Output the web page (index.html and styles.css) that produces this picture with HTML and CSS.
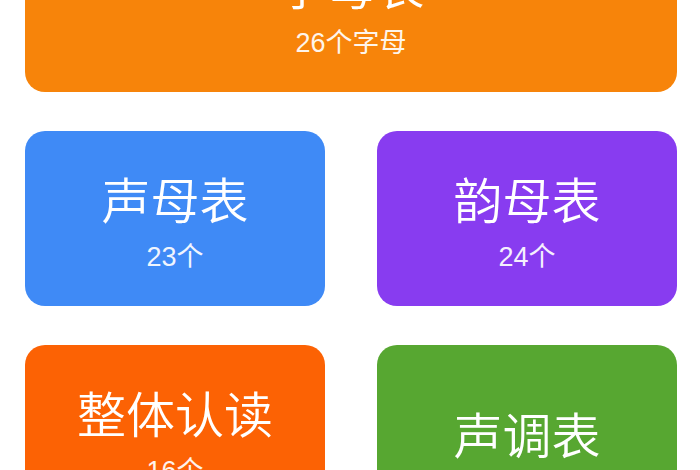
FILE: index.html
```html
<!DOCTYPE html>
<html lang="zh-CN">
<head>
  <meta charset="UTF-8">
  <title>拼音表</title>
  <link rel="stylesheet" href="styles.css">
</head>
<body>

  <div class="menu">
    <div class="card card-wide orange">
      <div class="card-title">字母表</div>
      <div class="card-sub">26个字母</div>
    </div>
    <div class="card blue">
      <div class="card-title">声母表</div>
      <div class="card-sub">23个</div>
    </div>
    <div class="card purple">
      <div class="card-title">韵母表</div>
      <div class="card-sub">24个</div>
    </div>
    <div class="card red">
      <div class="card-title">整体认读</div>
      <div class="card-sub">16个</div>
    </div>
    <div class="card green single">
      <div class="card-title">声调表</div>
    </div>
  </div>

</body>
</html>
```

FILE: styles.css
```css
* {
  margin: 0;
  padding: 0;
  box-sizing: border-box;
}

body {
  background: #fff;
  font-family: "Noto Sans CJK SC", "Noto Sans", sans-serif;
  color: white;
  overflow: hidden;
}

.menu {
  display: grid;
  grid-template-columns: 300px 300px;
  column-gap: 52px;
  row-gap: 39px;
  padding: 0 23px 0 25px;
  margin-top: -83px;
}

.card {
  height: 175px;
  border-radius: 20px;
  display: flex;
  flex-direction: column;
  justify-content: center;
  align-items: center;
  padding-top: 6px;
}

.card.single {
  padding-top: 0;
}

.card-wide {
  grid-column: 1 / 3;
}

.card-title {
  font-size: 49px;
  font-weight: 350;
  line-height: 56px;
}

.card-sub {
  font-family: "Liberation Sans", "Noto Sans CJK SC", sans-serif;
  font-size: 27px;
  line-height: 32px;
  margin-top: 15px;
  opacity: 0.92;
}

.orange { background: #f7840a; }
.blue   { background: #3f8af6; }
.purple { background: #883cf0; }
.red    { background: #fc6204; }
.green  { background: #57a731; }
```
